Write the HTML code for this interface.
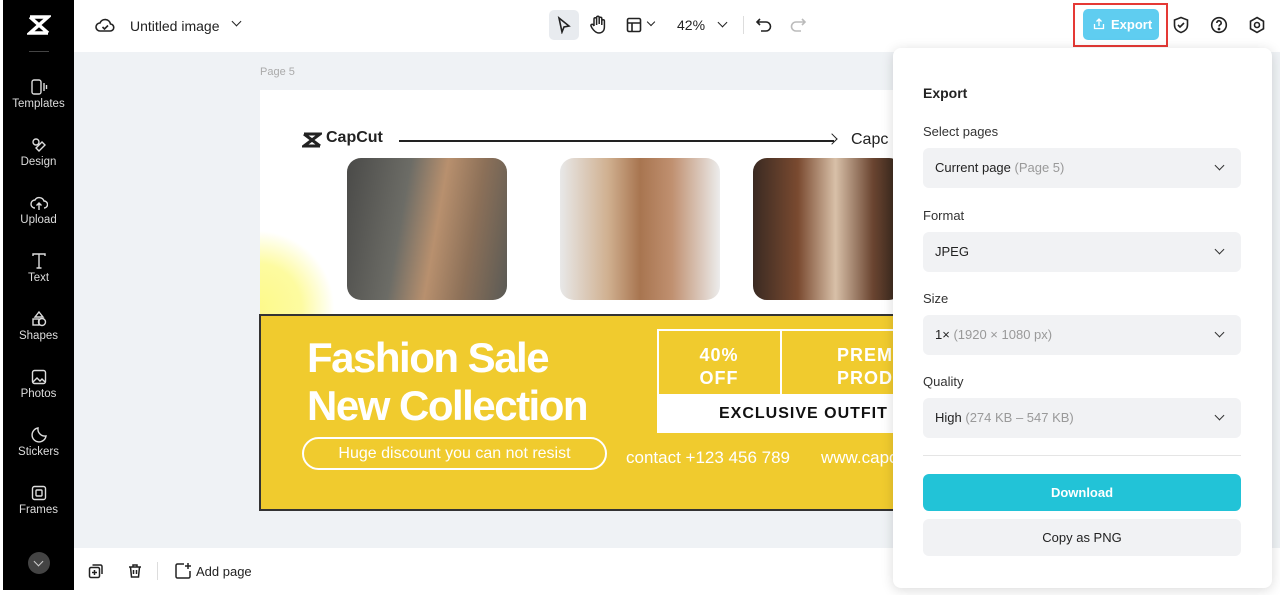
<!DOCTYPE html>
<html><head><style>
*{margin:0;padding:0;box-sizing:border-box}
body{width:1280px;height:595px;overflow:hidden;font-family:"Liberation Sans",sans-serif;background:#fff;position:relative}
.abs{position:absolute}
.side{left:3px;top:0;width:71px;height:590px;background:#000}
.si{position:absolute;left:0;width:71px;text-align:center;color:#ddd;font-size:11.5px}
.si svg{display:block;margin:0 auto 2px}
.canvas{left:74px;top:52px;width:1206px;height:496px;background:#eff2f5}
.sel{left:923px;width:318px;height:40px;background:#f1f2f4;border-radius:6px;font-size:13px;color:#222;padding:12px 12px}
.sel span{color:#999}
.sel:after{content:"";position:absolute;right:18px;top:14px;width:6px;height:6px;border-right:1.6px solid #333;border-bottom:1.6px solid #333;transform:rotate(45deg)}
.lbl{left:923px;font-size:13px;color:#333}
</style></head><body>
<div class="abs side">
 <svg class="abs" style="left:24px;top:14px" width="24" height="22" viewBox="0 0 24 22"><path d="M3 3h18L3 19h18M3 3l18 16" stroke="#fff" stroke-width="3.5" fill="none"/></svg>
 <div class="abs" style="left:26px;top:51px;width:20px;height:1px;background:#444"></div>
 <div class="si" style="top:78px"><svg width="18" height="18" viewBox="0 0 18 18" fill="none" stroke="#ddd" stroke-width="1.4"><rect x="2" y="2" width="9" height="14" rx="2"/><path d="M14 5v8M16.5 7v4"/></svg>Templates</div>
 <div class="si" style="top:136px"><svg width="18" height="18" viewBox="0 0 18 18" fill="none" stroke="#ddd" stroke-width="1.4"><circle cx="6" cy="6" r="3"/><path d="M9 15l6-6-3-3-6 6z"/></svg>Design</div>
 <div class="si" style="top:194px"><svg width="18" height="18" viewBox="0 0 18 18" fill="none" stroke="#ddd" stroke-width="1.4"><path d="M5 14a4 4 0 010-8 5 5 0 019 1 3.5 3.5 0 010 7M9 16V9M6.5 11.5L9 9l2.5 2.5"/></svg>Upload</div>
 <div class="si" style="top:252px"><svg width="18" height="18" viewBox="0 0 18 18" fill="none" stroke="#ddd" stroke-width="1.4"><path d="M3 4V2h12v2M9 2v14M6.5 16h5"/></svg>Text</div>
 <div class="si" style="top:310px"><svg width="18" height="18" viewBox="0 0 18 18" fill="none" stroke="#ddd" stroke-width="1.4"><path d="M9 2l4 5H5z"/><circle cx="12" cy="12" r="3.5"/><rect x="3" y="9" width="6" height="6"/></svg>Shapes</div>
 <div class="si" style="top:368px"><svg width="18" height="18" viewBox="0 0 18 18" fill="none" stroke="#ddd" stroke-width="1.4"><rect x="2.5" y="2.5" width="13" height="13" rx="2"/><path d="M3 14l4-4 3 3 2-2 3 3"/></svg>Photos</div>
 <div class="si" style="top:426px"><svg width="18" height="18" viewBox="0 0 18 18" fill="none" stroke="#ddd" stroke-width="1.4"><path d="M16 10A7 7 0 118 2a7 7 0 008 8z"/></svg>Stickers</div>
 <div class="si" style="top:484px"><svg width="18" height="18" viewBox="0 0 18 18" fill="none" stroke="#ddd" stroke-width="1.4"><rect x="2.5" y="2.5" width="13" height="13" rx="2"/><rect x="6" y="6" width="6" height="6" rx="1"/></svg>Frames</div>
 <div class="abs" style="left:25px;top:552px;width:22px;height:22px;border-radius:50%;background:#444"></div>
 <div class="abs" style="left:32px;top:558px;width:7px;height:7px;border-right:1.5px solid #ccc;border-bottom:1.5px solid #ccc;transform:rotate(45deg)"></div>
</div>
<div class="abs" style="left:74px;top:272px;width:6px;height:48px;background:#222;border-radius:0 6px 6px 0"></div>

<svg class="abs" style="left:95px;top:16px" width="20" height="18" viewBox="0 0 20 18" fill="none" stroke="#222" stroke-width="1.6"><path d="M5 15a4 4 0 010-8 5.5 5.5 0 0110.5 1A3.5 3.5 0 0115 15z"/><path d="M7.5 11l2 2 3.5-3.5"/></svg>
<div class="abs" style="left:130px;top:18px;font-size:14px;color:#222">Untitled image</div>
<div class="abs" style="left:233px;top:18px;width:7px;height:7px;border-right:1.6px solid #222;border-bottom:1.6px solid #222;transform:rotate(45deg)"></div>
<div class="abs" style="left:549px;top:10px;width:30px;height:30px;background:#e8ebef;border-radius:5px"></div>
<svg class="abs" style="left:556px;top:16px" width="16" height="18" viewBox="0 0 16 18" fill="none" stroke="#222" stroke-width="1.6"><path d="M3 2l10 8-5 1-2 5z"/></svg>
<svg class="abs" style="left:589px;top:15px" width="18" height="20" viewBox="0 0 18 20" fill="none" stroke="#222" stroke-width="1.5"><path d="M5 11V4a1.3 1.3 0 012.6 0v6M7.6 9V2.5a1.3 1.3 0 012.6 0V9M10.2 9V3.5a1.3 1.3 0 012.6 0V10M12.8 10V6a1.3 1.3 0 012.6 0v6c0 4-2.5 6-5.5 6S5 16 3 13l-1-2a1.3 1.3 0 012.2-1.3L5 11"/></svg>
<svg class="abs" style="left:626px;top:17px" width="16" height="16" viewBox="0 0 16 16" fill="none" stroke="#222" stroke-width="1.6"><rect x="1.5" y="1.5" width="13" height="13" rx="1.5"/><path d="M1.5 6h13M6 6v8.5"/></svg>
<div class="abs" style="left:648px;top:19px;width:6px;height:6px;border-right:1.5px solid #222;border-bottom:1.5px solid #222;transform:rotate(45deg)"></div>
<div class="abs" style="left:677px;top:17px;font-size:14px;color:#222">42%</div>
<div class="abs" style="left:719px;top:19px;width:7px;height:7px;border-right:1.6px solid #222;border-bottom:1.6px solid #222;transform:rotate(45deg)"></div>
<div class="abs" style="left:743px;top:16px;width:1px;height:18px;background:#ddd"></div>
<svg class="abs" style="left:755px;top:16px" width="18" height="18" viewBox="0 0 18 18" fill="none" stroke="#222" stroke-width="1.6"><path d="M5 3L2 6l3 3M2 6h9a4.5 4.5 0 010 9H6"/></svg>
<svg class="abs" style="left:789px;top:16px" width="18" height="18" viewBox="0 0 18 18" fill="none" stroke="#bbb" stroke-width="1.6"><path d="M13 3l3 3-3 3M16 6H7a4.5 4.5 0 000 9h5"/></svg>

<div class="abs" style="left:1073px;top:3px;width:95px;height:44px;border:2px solid #e53935"></div>
<div class="abs" style="left:1083px;top:9px;width:76px;height:31px;background:#5fcdf0;border-radius:5px;color:#fff;font-size:13px;font-weight:bold;padding:8px 0 0 28px">Export</div>
<svg class="abs" style="left:1093px;top:18px" width="12" height="12" viewBox="0 0 12 12" fill="none" stroke="#fff" stroke-width="1.3"><path d="M6 8V1M3.5 3.5L6 1l2.5 2.5M1.5 6v4.5h9V6"/></svg>
<svg class="abs" style="left:1172px;top:16px" width="18" height="18" viewBox="0 0 18 18" fill="none" stroke="#222" stroke-width="1.6"><path d="M9 1.5l6.5 2.5v5c0 4-3 6.5-6.5 7.5C5.5 15.5 2.5 13 2.5 9V4z"/><path d="M6 9l2 2 4-4"/></svg>
<svg class="abs" style="left:1210px;top:16px" width="18" height="18" viewBox="0 0 18 18" fill="none" stroke="#222" stroke-width="1.6"><circle cx="9" cy="9" r="7.3"/><path d="M6.8 7a2.2 2.2 0 114 1.2c-.8.6-1.8 1-1.8 2.3"/><circle cx="9" cy="13" r=".6" fill="#222"/></svg>
<svg class="abs" style="left:1248px;top:16px" width="18" height="18" viewBox="0 0 18 18" fill="none" stroke="#222" stroke-width="1.6"><path d="M9 1.5l6.5 3.75v7.5L9 16.5l-6.5-3.75v-7.5z"/><circle cx="9" cy="9" r="2.5"/></svg>
<svg class="abs" style="left:1150px;top:50px" width="40" height="50" viewBox="0 0 40 50" fill="none" stroke="#e53935" stroke-width="2"><path d="M33 46L8 6M8 6l1 10M8 6l9 4"/></svg>

<div class="abs canvas"></div>
<div class="abs" style="left:260px;top:66px;font-size:11px;color:#aaa">Page 5</div>
<div class="abs" style="left:260px;top:90px;width:640px;height:225px;background:#fff;overflow:hidden">
 <div class="abs" style="left:-80px;top:140px;width:155px;height:155px;border-radius:50%;background:radial-gradient(circle,#fdf98a 0%,#fdfba0 40%,rgba(255,255,255,0) 70%)"></div>
 <svg class="abs" style="left:42px;top:42px" width="20" height="16" viewBox="0 0 20 16"><path d="M2 2h16L2 14h16M2 2l16 12" stroke="#222" stroke-width="3" fill="none"/></svg>
 <div class="abs" style="left:66px;top:39px;font-size:16px;font-weight:bold;color:#222">CapCut</div>
 <div class="abs" style="left:139px;top:50px;width:435px;height:1.5px;background:#222"></div>
 <div class="abs" style="left:568px;top:45px;width:8px;height:8px;border-right:1.5px solid #222;border-top:1.5px solid #222;transform:rotate(45deg)"></div>
 <div class="abs" style="left:591px;top:41px;font-size:16px;color:#222">Capc</div>
 <div class="abs" style="left:87px;top:68px;width:160px;height:142px;border-radius:14px;background:linear-gradient(100deg,#4a4a48 0%,#6c6c66 35%,#b8906e 55%,#8c7058 75%,#5a5a55 100%)"></div>
 <div class="abs" style="left:300px;top:68px;width:160px;height:142px;border-radius:14px;background:linear-gradient(90deg,#e8e8e8 0%,#d0b090 30%,#a87550 50%,#c09070 70%,#ececec 100%)"></div>
 <div class="abs" style="left:493px;top:68px;width:150px;height:142px;border-radius:14px;background:linear-gradient(90deg,#3a2a22 0%,#7a4a30 30%,#d8c0a8 55%,#6a4430 80%,#2a2018 100%)"></div>
</div>
<div class="abs" style="left:259px;top:314px;width:650px;height:197px;background:#f0cb2e;border:2px solid #333;border-right:none;overflow:hidden">
 <div class="abs" style="left:46px;top:18px;font-size:42px;font-weight:bold;color:#fff;line-height:48px;letter-spacing:-1.5px">Fashion Sale<br>New Collection</div>
 <div class="abs" style="left:41px;top:121px;width:305px;height:33px;border:2px solid #fff;border-radius:17px;color:#fff;font-size:16px;text-align:center;line-height:29px">Huge discount you can not resist</div>
 <div class="abs" style="left:396px;top:13px;width:260px;height:67px;border:2px solid #fff"></div>
 <div class="abs" style="left:519px;top:13px;width:2px;height:67px;background:#fff"></div>
 <div class="abs" style="left:396px;top:80px;width:260px;height:37px;background:#fff;font-size:16px;font-weight:bold;color:#111;padding:9px 0 0 62px;letter-spacing:1px">EXCLUSIVE OUTFIT</div>
 <div class="abs" style="left:398px;top:28px;width:120px;text-align:center;color:#fff;font-size:18px;font-weight:bold;line-height:23px;letter-spacing:1px">40%<br>OFF</div>
 <div class="abs" style="left:576px;top:28px;color:#fff;font-size:18px;font-weight:bold;line-height:23px;letter-spacing:1px">PREM<br>PROD</div>
 <div class="abs" style="left:365px;top:132px;color:#fff;font-size:17px">contact +123 456 789</div>
 <div class="abs" style="left:560px;top:132px;color:#fff;font-size:17px">www.capcut</div>
</div>

<div class="abs" style="left:74px;top:548px;width:820px;height:47px;background:#fff"></div>
<svg class="abs" style="left:88px;top:563px" width="16" height="16" viewBox="0 0 16 16" fill="none" stroke="#222" stroke-width="1.5"><rect x="1.5" y="4.5" width="10" height="10" rx="1.5"/><path d="M4.5 2h8a1.5 1.5 0 011.5 1.5V11"/><path d="M6.5 7v5M4 9.5h5"/></svg>
<svg class="abs" style="left:127px;top:563px" width="16" height="16" viewBox="0 0 16 16" fill="none" stroke="#222" stroke-width="1.5"><path d="M2 4h12M6 4V2h4v2M3.5 4l1 10h7l1-10M6.5 7v4M9.5 7v4"/></svg>
<div class="abs" style="left:157px;top:562px;width:1px;height:18px;background:#ddd"></div>
<svg class="abs" style="left:174px;top:562px" width="18" height="18" viewBox="0 0 18 18" fill="none" stroke="#222" stroke-width="1.5"><path d="M10 2H3.5A1.5 1.5 0 002 3.5v11A1.5 1.5 0 003.5 16h11a1.5 1.5 0 001.5-1.5V9"/><path d="M14 1v6M11 4h6"/></svg>
<div class="abs" style="left:196px;top:564px;font-size:13px;color:#222">Add page</div>

<div class="abs" style="left:893px;top:48px;width:379px;height:540px;background:#fff;border-radius:8px;box-shadow:0 2px 12px rgba(0,0,0,.15)"></div>
<div class="abs" style="left:923px;top:85px;font-size:14px;font-weight:bold;color:#222">Export</div>
<div class="abs lbl" style="top:124px">Select pages</div>
<div class="abs sel" style="top:148px">Current page <span>(Page 5)</span></div>
<div class="abs lbl" style="top:208px">Format</div>
<div class="abs sel" style="top:232px">JPEG</div>
<div class="abs lbl" style="top:291px">Size</div>
<div class="abs sel" style="top:315px">1× <span>(1920 × 1080 px)</span></div>
<div class="abs lbl" style="top:374px">Quality</div>
<div class="abs sel" style="top:398px">High <span>(274 KB – 547 KB)</span></div>
<div class="abs" style="left:923px;top:455px;width:318px;height:1px;background:#e5e5e5"></div>
<div class="abs" style="left:923px;top:474px;width:318px;height:37px;background:#22c3d7;border-radius:6px;color:#fff;font-size:13px;font-weight:bold;text-align:center;line-height:37px">Download</div>
<div class="abs" style="left:923px;top:519px;width:318px;height:37px;background:#f1f2f4;border-radius:6px;color:#222;font-size:13px;text-align:center;line-height:37px">Copy as PNG</div>
</body></html>
